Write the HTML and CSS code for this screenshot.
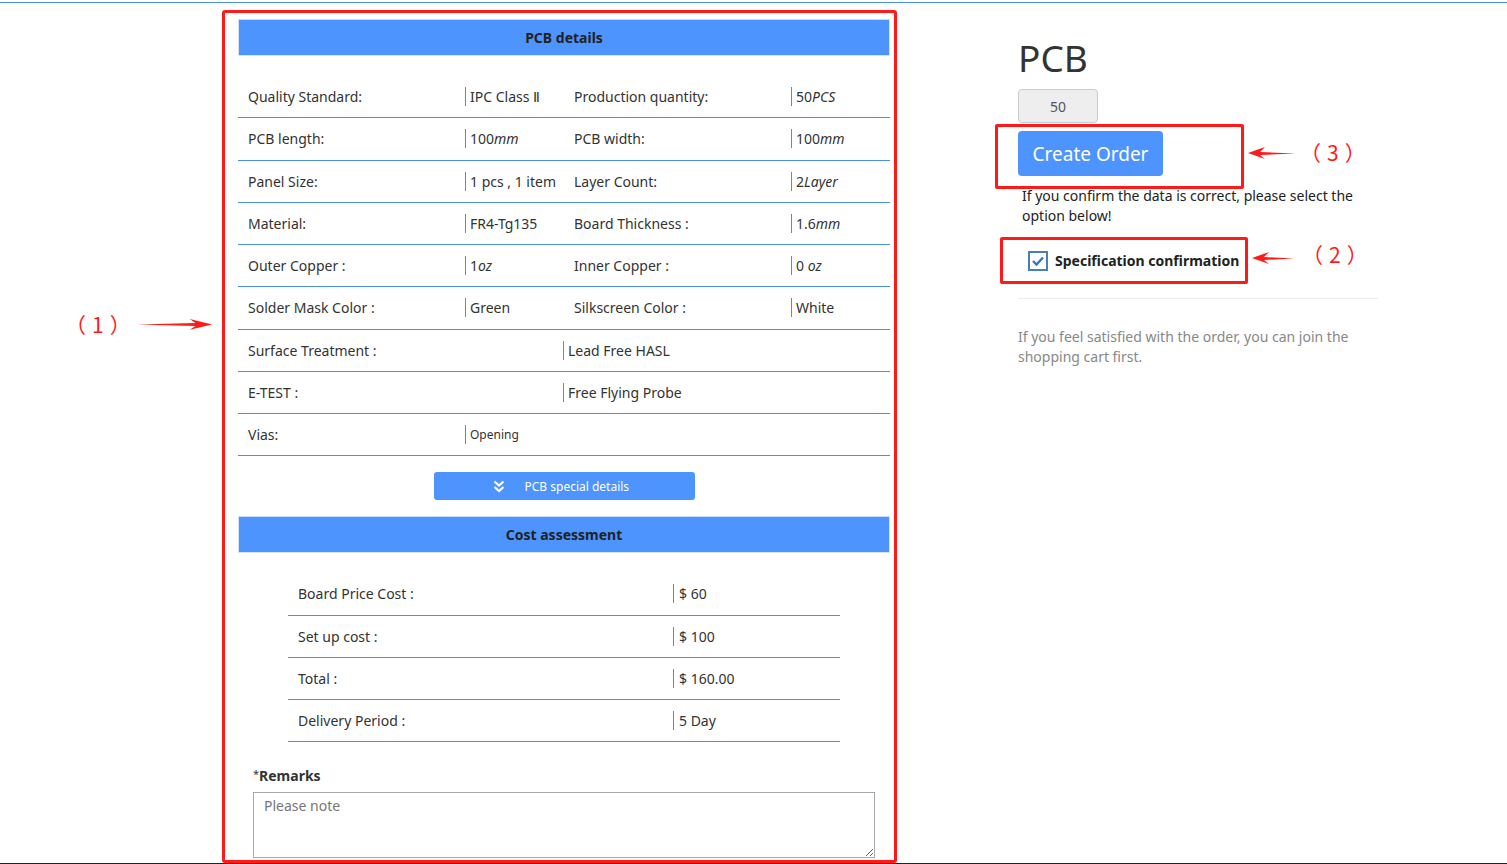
FILE: index.html
```html
<!DOCTYPE html>
<html>
<head>
<meta charset="utf-8">
<link rel="stylesheet" href="styles.css">
</head>
<body>
<div class="page">
  <div class="note-left">
    <span class="tag">（1）</span>
    <svg class="arrow-r" width="80" height="14" viewBox="0 0 80 14"><path d="M0 6.5 L62 5 L56 0.5 L80 6.5 L56 12 L62 8 Z" fill="#ff1a1a"/></svg>
  </div>
  <div class="main-box">
    <div class="sec-head">PCB details</div>
    <div class="spec">
      <div class="row r4"><span class="lab">Quality Standard:</span><span class="val">IPC Class Ⅱ</span><span class="lab">Production quantity:</span><span class="val">50<i>PCS</i></span></div>
      <div class="row r4"><span class="lab">PCB length:</span><span class="val">100<i>mm</i></span><span class="lab">PCB width:</span><span class="val">100<i>mm</i></span></div>
      <div class="row r4"><span class="lab">Panel Size:</span><span class="val">1 pcs , 1 item</span><span class="lab">Layer Count:</span><span class="val">2<i>Layer</i></span></div>
      <div class="row r4"><span class="lab">Material:</span><span class="val">FR4-Tg135</span><span class="lab">Board Thickness :</span><span class="val">1.6<i>mm</i></span></div>
      <div class="row r4"><span class="lab">Outer Copper :</span><span class="val">1<i>oz</i></span><span class="lab">Inner Copper :</span><span class="val">0 <i>oz</i></span></div>
      <div class="row r4"><span class="lab">Solder Mask Color :</span><span class="val">Green</span><span class="lab">Silkscreen Color :</span><span class="val">White</span></div>
      <div class="row r2"><span class="lab">Surface Treatment :</span><span class="val">Lead Free HASL</span></div>
      <div class="row r2"><span class="lab">E-TEST :</span><span class="val">Free Flying Probe</span></div>
      <div class="row rv"><span class="lab">Vias:</span><span class="val small">Opening</span></div>
    </div>
    <div class="btn-wrap">
      <button class="special-btn"><svg width="12" height="13" viewBox="0 0 12 13"><path d="M1.5 1.5 L6 5.5 L10.5 1.5 M1.5 7 L6 11 L10.5 7" fill="none" stroke="#fff" stroke-width="2.2"/></svg><span>PCB special details</span></button>
    </div>
    <div class="sec-head">Cost assessment</div>
    <div class="cost">
      <div class="crow"><span class="lab">Board Price Cost :</span><span class="val">$ 60</span></div>
      <div class="crow"><span class="lab">Set up cost :</span><span class="val">$ 100</span></div>
      <div class="crow"><span class="lab">Total :</span><span class="val">$ 160.00</span></div>
      <div class="crow"><span class="lab">Delivery Period :</span><span class="val">5 Day</span></div>
    </div>
    <div class="remarks">
      <div class="rem-label"><span class="star">*</span>Remarks</div>
      <textarea class="rem-input" placeholder="Please note"></textarea>
    </div>
  </div>
  <div class="side">
    <h1 class="title">PCB</h1>
    <div class="qty">50</div>
    <div class="order-row">
      <div class="red-box order-box"><button class="create-btn">Create Order</button></div>
      <div class="ann"><svg class="arrow-l" width="48" height="14" viewBox="0 0 48 14"><path d="M48 7.5 L12 6 L17 1 L0 7 L17 13 L12 9 Z" fill="#ff1a1a"/></svg><span class="tag">（3）</span></div>
    </div>
    <p class="confirm-text">If you confirm the data is correct, please select the option below!</p>
    <div class="check-row">
      <div class="red-box check-box">
        <svg class="cb" width="20" height="20" viewBox="0 0 20 20"><rect x="1" y="1" width="18" height="18" fill="#fff" stroke="#4b7fb8" stroke-width="2"/><path d="M5 10 L8.5 13.5 L15 6.5" fill="none" stroke="#2f77c7" stroke-width="2.4"/></svg>
        <span class="check-label">Specification confirmation</span>
      </div>
      <div class="ann ann2"><svg class="arrow-l" width="42" height="14" viewBox="0 0 42 14"><path d="M42 7.5 L12 6 L17 1 L0 7 L17 13 L12 9 Z" fill="#ff1a1a"/></svg><span class="tag">（2）</span></div>
    </div>
    <hr class="sep">
    <p class="cart-text">If you feel satisfied with the order, you can join the shopping cart first.</p>
  </div>
</div>
<div class="bottom-line"></div>
</body>
</html>
```
FILE: styles.css
```css
* { box-sizing: border-box; }
html, body { margin: 0; padding: 0; }
body {
  font-family: "Noto Sans", "Open Sans", sans-serif;
  font-size: 14px;
  color: #333;
  background: #fff;
  border-top: 1px solid #4a90e2;
  margin-top: 2px;
  height: 862px;
  overflow: hidden;
}
.page {
  display: flex;
  align-items: flex-start;
  padding-top: 7px;
}
.note-left {
  width: 222px;
  display: flex;
  align-items: center;
  justify-content: space-between;
  padding-left: 65px;
  padding-right: 10px;
  padding-top: 304px;
}
.tag {
  color: #ff1a1a;
  font-family: "Noto Sans CJK SC", "Noto Sans", sans-serif;
  font-size: 21px;
  letter-spacing: 6px;
  line-height: 1;
  white-space: nowrap;
}
.main-box {
  width: 675px;
  border: 3px solid #ff1a1a;
  border-radius: 3px;
  padding: 6px 4px 2px 13px;
  height: 853px;
}
.sec-head {
  width: 652px;
  height: 37px;
  background: #4d94ff;
  border: 1px solid #d8e4f2;
  border-top-color: #c9dcf5;
  color: #222;
  font-weight: bold;
  font-size: 14px;
  display: flex;
  align-items: center;
  justify-content: center;
}
.spec { width: 652px; margin-top: 20px; }
.row {
  display: grid;
  height: 42.25px;
  align-items: center;
  border-bottom: 1.5px solid #4a90e2;
}
.r4 { grid-template-columns: 227px 99px 227px 99px; }
.r2 { grid-template-columns: 325px 327px; }
.rv { grid-template-columns: 227px 425px; }
.lab { padding-left: 10px; white-space: nowrap; }
.val {
  border-left: 1px solid #4a90e2;
  padding-left: 4px;
  line-height: 19px;
  white-space: nowrap;
}
.val i { font-style: italic; }
.val.small { font-size: 12px; }
.btn-wrap { width: 652px; display: flex; justify-content: center; padding: 16px 0 16px 0; }
.special-btn {
  width: 261px;
  height: 28px;
  background: #4d94ff;
  border: none;
  border-radius: 3px;
  color: #fff;
  font-family: "Noto Sans", sans-serif;
  font-size: 12px;
  display: flex;
  align-items: center;
  padding-left: 59px;
}
.special-btn span { margin-left: 20px; }
.cost { width: 552px; margin: 20px 0 0 50px; }
.crow {
  display: grid;
  grid-template-columns: 385px 167px;
  height: 42.25px;
  align-items: center;
  border-bottom: 1.5px solid #4a90e2;
}
.crow .val { padding-left: 5px; }
.remarks { padding: 24px 0 0 15px; }
.rem-label { font-weight: bold; font-size: 14px; height: 22px; }
.rem-label .star { font-weight: normal; font-size: 11px; vertical-align: top; }
.rem-input {
  display: block;
  width: 622px;
  height: 66px;
  margin-top: 4px;
  border: 1px solid #aaa;
  padding: 3px 10px;
  font-family: "Noto Sans", sans-serif;
  font-size: 14px;
  resize: both;
}
.rem-input::placeholder { color: #777; }
.side { margin-left: 121px; width: 370px; padding-top: 25px; }
.title {
  margin: 0;
  font-size: 37px;
  font-weight: normal;
  color: #333;
  line-height: 46px;
}
.qty {
  width: 80px;
  height: 34px;
  margin-top: 8px;
  background: #eee;
  border: 1px solid #ccc;
  border-radius: 4px;
  display: flex;
  align-items: center;
  justify-content: center;
  color: #555;
}
.order-row { display: flex; align-items: center; margin-left: -23px; }
.red-box { border: 3px solid #ff1a1a; border-radius: 2px; }
.order-box {
  width: 249px;
  height: 65px;
  padding: 4px 0 0 20px;
  margin-top: 1px;
}
.create-btn {
  width: 145px;
  height: 45px;
  border: none;
  border-radius: 4px;
  background: #4d94ff;
  color: #fff;
  font-family: "Noto Sans", sans-serif;
  font-size: 19px;
}
.ann { display: flex; align-items: center; margin-left: 4px; margin-top: -6px; }
.ann .tag { margin-left: 4px; margin-top: -2px; }
.confirm-text { margin: -3px 0 0 4px; line-height: 20px; color: #222; width: 350px; }
.check-row { display: flex; align-items: center; margin-left: -18px; margin-top: 11px; }
.check-box {
  width: 248px;
  height: 47px;
  display: flex;
  align-items: center;
  padding-left: 25px;
}
.cb { margin-right: 7px; }
.check-label { font-weight: bold; color: #222; font-size: 14px; }
.ann2 { margin-left: 4px; margin-top: -6px; }
.ann2 .tag { margin-left: 8px; margin-top: -6px; }
.sep { border: 0; border-top: 1px solid #eee; margin: 14px 0 0 0; width: 360px; }
.cart-text { color: #888; margin: 28px 0 0 0; line-height: 20px; width: 350px; }
.bottom-line { position: fixed; left: 0; right: 0; bottom: 0; height: 1px; background: #222; }
```
